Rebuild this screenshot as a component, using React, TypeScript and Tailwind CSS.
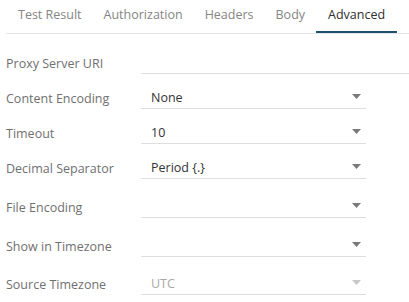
import React from "react";

const tabs = ["Test Result", "Authorization", "Headers", "Body", "Advanced"];

type Row = { label: string; value?: string; select?: boolean; disabled?: boolean; full?: boolean; gap: string };

const rows: Row[] = [
    { label: "Proxy Server URI", full: true, gap: "mt-[14px]" },
    { label: "Content Encoding", value: "None", select: true, gap: "mt-[9px]" },
    { label: "Timeout", value: "10", select: true, gap: "mt-[9px]" },
    { label: "Decimal Separator", value: "Period {.}", select: true, gap: "mt-[9px]" },
    { label: "File Encoding", select: true, gap: "mt-[13px]" },
    { label: "Show in Timezone", select: true, gap: "mt-[13px]" },
    { label: "Source Timezone", value: "UTC", select: true, disabled: true, gap: "mt-[12px]" },
];

function Caret({ disabled }: { disabled?: boolean }) {
    return (
        <svg width="9" height="5" viewBox="0 0 9 5" className="mb-[9px]">
            <path d="M0 0 H9 L4.5 5 Z" fill={disabled ? "#c8c8c8" : "#7a7a7a"} />
        </svg>
    );
}

export default function App() {
    return (
        <div className="w-[409px] h-[302px] bg-white overflow-hidden font-['Open_Sans',sans-serif] text-[12.5px]">
            {/* Tabs */}
            <div className="ml-[6px] pl-[1px] flex h-[34px] border-b border-[#e6e6e6] whitespace-nowrap">
                {tabs.map((t) => {
                    const active = t === "Advanced";
                    return (
                        <div
                            key={t}
                            className={
                                active
                                    ? "shrink-0 px-[12px] pt-[6px] h-[33px] border-b-[2px] border-[#1f4f6c] text-[#2e2e2e] leading-[18px]"
                                    : "shrink-0 px-[11px] pt-[6px] h-[33px] text-[#858585] leading-[18px]"
                            }
                        >
                            {t}
                        </div>
                    );
                })}
            </div>

            {/* Form */}
            <div className="pl-[6px]">
                {rows.map((r) => (
                    <div key={r.label} className={`flex items-end ${r.gap}`}>
                        <div className="w-[135px] pb-[1px] leading-[18px] text-[#707070] whitespace-nowrap">{r.label}</div>
                        <div
                            className={
                                r.full
                                    ? "flex-1 h-[26px] border-b border-[#dedede]"
                                    : "w-[225px] h-[26px] flex items-end justify-between pl-[10px] pr-[5px] border-b border-[#dedede]"
                            }
                        >
                            {!r.full && (
                                <>
                                    <span
                                        className={
                                            r.disabled
                                                ? "pb-[1px] leading-[18px] text-[#a8a8a8]"
                                                : "pb-[1px] leading-[18px] text-[#333333]"
                                        }
                                    >
                                        {r.value ?? ""}
                                    </span>
                                    {r.select && <Caret disabled={r.disabled} />}
                                </>
                            )}
                        </div>
                    </div>
                ))}
            </div>
        </div>
    );
}
